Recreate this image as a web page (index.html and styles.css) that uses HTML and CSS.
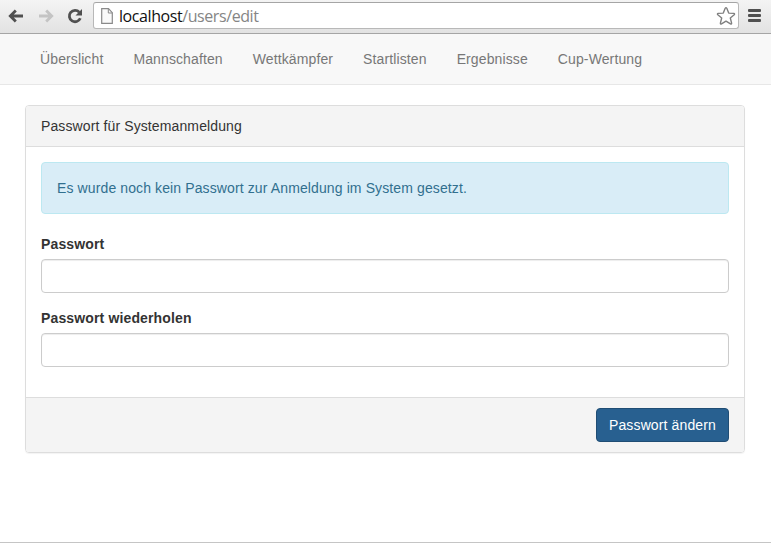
FILE: index.html
```html
<!DOCTYPE html>
<html lang="de">
<head>
<meta charset="utf-8">
<title>Passwort</title>
<link rel="stylesheet" href="styles.css">
</head>
<body>
<header class="toolbar">
  <svg class="icon back" width="16" height="14" viewBox="0 0 16 14"><path d="M15 7H3M7.800 1.500L2.300 7l5.500 5.500" fill="none" stroke="#505050" stroke-width="2.800"/></svg>
  <svg class="icon forward" width="16" height="14" viewBox="0 0 16 14"><path d="M1 7h12M8.200 1.500l5.500 5.500-5.500 5.500" fill="none" stroke="#c4c4c4" stroke-width="2.800"/></svg>
  <svg class="icon reload" width="16" height="16" viewBox="0 0 16 16"><path d="M12.300 4.200A5.700 5.700 0 1 0 13.300 10.300" fill="none" stroke="#505050" stroke-width="2.800"/><path d="M15 1v6.500H8.500z" fill="#505050"/></svg>
  <div class="address">
    <svg class="page" width="12" height="16" viewBox="0 0 12 16"><path d="M.7.700h6.800l3.800 4v10.600H.7z" fill="#fafafa" stroke="#8a8a8a" stroke-width="1.200"/><path d="M7.300 1v4h4" fill="none" stroke="#8a8a8a"/></svg>
    <span class="url">localhost<span class="path">/users/edit</span></span>
    <svg class="star" width="20" height="20" viewBox="0 0 20 20"><path d="M9.200 2.300q.8-1.300 1.600 0l1.900 4.800 5.100.3q1.300.3.400 1.300l-3.900 3.300 1.300 5.100q.1 1.300-1.100.8L10 15.100l-4.500 2.800q-1.200.5-1.100-.8l1.300-5.100L1.800 8.700q-.9-1 .4-1.300l5.100-.3z" fill="#fff" stroke="#808080" stroke-width="1.400" stroke-linejoin="round"/></svg>
  </div>
  <svg class="menu" width="13" height="13" viewBox="0 0 13 13"><g fill="#505050"><rect width="13" height="3" rx="1"/><rect y="5" width="13" height="3" rx="1"/><rect y="10" width="13" height="3" rx="1"/></g></svg>
</header>
<nav class="navbar">
  <a>Überslicht</a><a>Mannschaften</a><a>Wettkämpfer</a><a>Startlisten</a><a>Ergebnisse</a><a>Cup-Wertung</a>
</nav>
<main class="panel">
  <div class="panel-heading">Passwort für Systemanmeldung</div>
  <div class="panel-body">
    <div class="alert">Es wurde noch kein Passwort zur Anmeldung im System gesetzt.</div>
    <div class="form-group"><label for="pw">Passwort</label><input id="pw" type="password"></div>
    <div class="form-group"><label for="pw2">Passwort wiederholen</label><input id="pw2" type="password"></div>
  </div>
  <div class="panel-footer"><button class="btn">Passwort ändern</button></div>
</main>
</body>
</html>
```
FILE: styles.css
```css
* { box-sizing: border-box; }
body {
  margin: 0;
  height: 543px;
  overflow: hidden;
  display: flex;
  flex-direction: column;
  border-bottom: 1px solid #c5c5c5;
  background: #fff;
  color: #333;
  font: 14px/20px "Liberation Sans", Arial, sans-serif;
  letter-spacing: 0.115px;
}
svg { display: block; flex: none; }
.toolbar {
  height: 34px;
  flex: none;
  display: flex;
  align-items: flex-start;
  padding: 2px 10px 0 8px;
  border-bottom: 1px solid #a5a5a5;
  background: linear-gradient(#f4f4f4, #e2e2e2);
}
.icon { margin-top: 7px; }
.back { margin-right: 14px; }
.forward { margin-right: 13px; }
.reload { margin-top: 6px; margin-right: 10px; }
.address {
  flex: 1;
  height: 27px;
  display: flex;
  align-items: center;
  padding: 0 2px 0 7px;
  border: 1px solid #b8b8b8;
  border-top-color: #a5a5a5;
  border-radius: 3px;
  background: #fff;
}
.url {
  flex: 1;
  margin-left: 6px;
  color: #111;
  font: 16px/22px "Open Sans", "Noto Sans", sans-serif;
  letter-spacing: -0.420px;
}
.path { color: #858585; }
.menu { margin: 7px 0 0 9px; }
.navbar {
  height: 51px;
  flex: none;
  display: flex;
  padding: 15px 25px;
  border-bottom: 1px solid #e7e7e7;
  background: #f8f8f8;
}
.navbar a { padding: 0 15px; color: #777; }
.panel {
  margin: 20px 26px 0 25px;
  border: 1px solid #ddd;
  border-radius: 4px;
  box-shadow: 0 1px 1px rgba(0, 0, 0, .05);
}
.panel-heading {
  padding: 10px 15px;
  border-bottom: 1px solid #ddd;
  border-radius: 3px 3px 0 0;
  background: #f4f4f4;
}
.panel-body { padding: 15px; }
.alert {
  margin-bottom: 20px;
  padding: 15px;
  border: 1px solid #bce8f1;
  border-radius: 4px;
  background: #d9edf7;
  color: #31708f;
}
.form-group { margin-bottom: 15px; }
.form-group label {
  display: block;
  margin-bottom: 5px;
  font-weight: bold;
  letter-spacing: 0.140px;
}
.form-group input {
  display: block;
  width: 100%;
  height: 34px;
  padding: 6px 12px;
  border: 1px solid #ccc;
  border-radius: 4px;
  background: #fff;
  box-shadow: inset 0 1px 1px rgba(0, 0, 0, .075);
}
.panel-footer {
  display: flex;
  justify-content: flex-end;
  padding: 10px 15px;
  border-top: 1px solid #ddd;
  border-radius: 0 0 3px 3px;
  background: #f4f4f4;
}
.btn {
  width: 133px;
  height: 34px;
  padding: 6px 0;
  border: 1px solid #204d74;
  border-radius: 4px;
  background: #286090;
  color: #fff;
  font: inherit;
  letter-spacing: 0.130px;
}
```
